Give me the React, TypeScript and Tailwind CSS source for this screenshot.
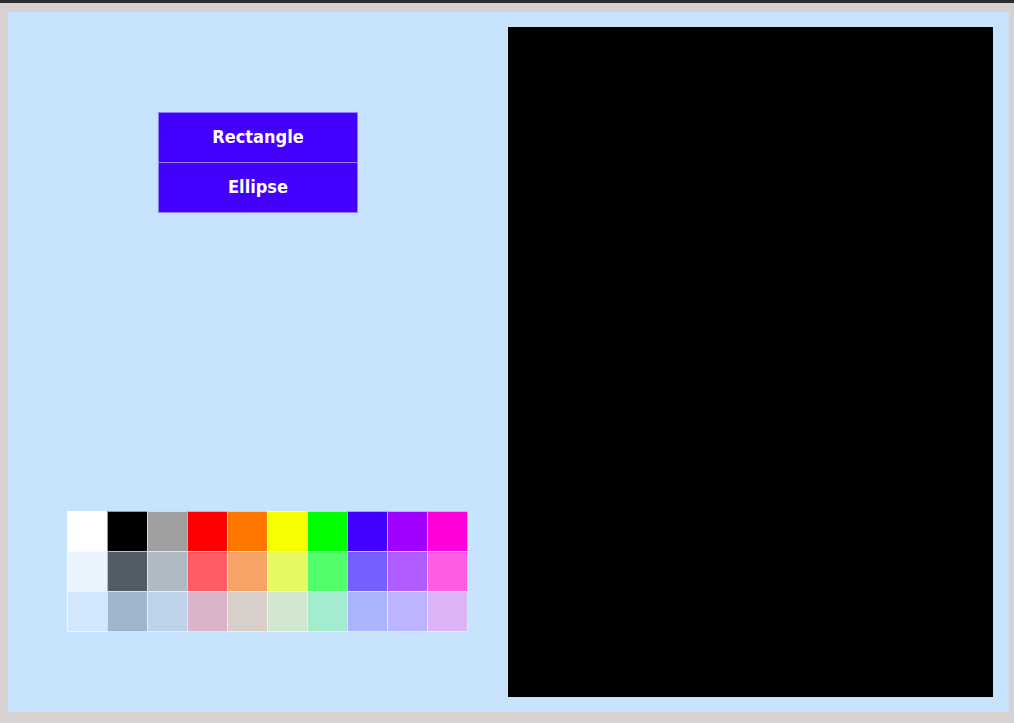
const palette = [
  ["#ffffff", "#000000", "#a0a0a0", "#ff0000", "#ff7700", "#f8ff00", "#00ff00", "#4400ff", "#a000ff", "#ff00d8"],
  ["#eaf4ff", "#525c66", "#b0bac4", "#ff5c66", "#f5a366", "#e6f862", "#52ff6a", "#7560ff", "#b05cff", "#ff5ce6"],
  ["#d2e6fc", "#a0b4ca", "#bed2e8", "#dab4ca", "#d8ceca", "#d2e8ce", "#a4ecce", "#aab4ff", "#bcb4ff", "#dab4f4"],
];

const tools = ["Rectangle", "Ellipse"];

export default function App() {
  return (
    <div className="w-[1014px] h-[723px] bg-[#d6d2d1] flex flex-col overflow-hidden">
      <div className="h-[3px] bg-[#2d2d2d]" />
      <div className="flex-1 pt-[9px] pl-[8px] pr-[5px] pb-[11px] flex">
        <div className="flex-1 bg-[#c7e3fe] flex pt-[15px] pb-[15px] pr-[16px]">
          <div className="w-[500px] flex flex-col">
            <div className="mt-[85px] ml-[150px] w-[200px] flex flex-col">
              {tools.map((t) => (
                <button
                  key={t}
                  className="h-[51px] pb-[2px] bg-[#4400ff] border border-[#8c80ff] text-white font-bold text-[18px] [font-family:'DejaVu_Sans_Condensed','DejaVu_Sans',sans-serif] -mt-px first:mt-0"
                >
                  {t}
                </button>
              ))}
            </div>
            <div className="mt-auto mb-[65px] ml-[59px] flex flex-col">
              {palette.map((row, r) => (
                <div key={r} className="flex -mt-px first:mt-0">
                  {row.map((c) => (
                    <div
                      key={c}
                      className="w-[41px] h-[41px] -ml-px first:ml-0 border border-white/60"
                      style={{ backgroundColor: c }}
                    />
                  ))}
                </div>
              ))}
            </div>
          </div>
          <div className="flex-1 bg-black" />
        </div>
      </div>
    </div>
  );
}
